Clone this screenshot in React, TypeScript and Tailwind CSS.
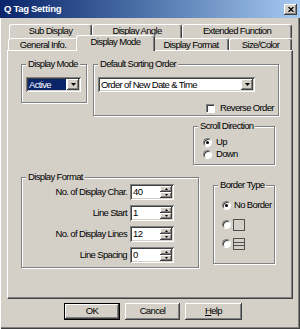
import React from "react";

const FONT = "font-['Liberation_Sans',Arial,sans-serif] text-[9.5px] tracking-[-0.65px] text-black";
const RAISED =
  "shadow-[inset_-1px_-1px_#404040,inset_1px_1px_#ffffff,inset_-2px_-2px_#808080,inset_2px_2px_#d4d0c8]";
const SUNKEN =
  "shadow-[inset_1px_1px_#808080,inset_-1px_-1px_#ffffff,inset_2px_2px_#404040,inset_-2px_-2px_#d4d0c8]";

function Tab({ label, className }: { label: string; className: string }) {
  return (
    <div
      className={`flex items-center justify-center border-t border-l border-white border-r border-r-[#404040] shadow-[inset_-1px_0_#808080] rounded-t-[3px] bg-[#d4d0c8] ${className}`}
    >
      {label}
    </div>
  );
}

function Group({
  label,
  className,
  children,
}: {
  label: string;
  className: string;
  children?: React.ReactNode;
}) {
  return (
    <div className={`relative border border-[#808080] shadow-[inset_1px_1px_#ffffff,1px_1px_#ffffff] ${className}`}>
      <span className="absolute -top-[7px] left-[4px] bg-[#d4d0c8] px-[2px] leading-[12px] whitespace-nowrap">
        {label}
      </span>
      {children}
    </div>
  );
}

function DropButton() {
  return (
    <div className={`w-[12px] h-full flex items-center justify-center bg-[#d4d0c8] ${RAISED}`}>
      <svg width="5" height="3" viewBox="0 0 5 3">
        <path d="M0 0h5L2.5 3z" fill="#000" />
      </svg>
    </div>
  );
}

function SpinButtons() {
  return (
    <div className="flex flex-col w-[12px] h-full">
      <div className={`flex-1 flex items-center justify-center bg-[#d4d0c8] ${RAISED}`}>
        <svg width="3" height="2" viewBox="0 0 3 2">
          <path d="M1.5 0L3 2H0z" fill="#000" />
        </svg>
      </div>
      <div className={`flex-1 flex items-center justify-center bg-[#d4d0c8] ${RAISED}`}>
        <svg width="3" height="2" viewBox="0 0 3 2">
          <path d="M0 0h3L1.5 2z" fill="#000" />
        </svg>
      </div>
    </div>
  );
}

function Radio({ checked }: { checked?: boolean }) {
  return (
    <div className="w-[9px] h-[9px] rounded-full bg-white border border-t-[#808080] border-l-[#808080] border-b-[#ffffff] border-r-[#ffffff] shadow-[inset_1px_1px_#404040] flex items-center justify-center">
      {checked && <div className="w-[3px] h-[3px] rounded-full bg-black" />}
    </div>
  );
}

function SpinRow({ label, value }: { label: string; value: string }) {
  return (
    <div className="flex items-center h-[16px] mb-[5px]">
      <span className="w-[105px] text-right whitespace-nowrap">{label}</span>
      <div className={`ml-[3px] flex w-[44px] h-[16px] bg-white p-[2px] ${SUNKEN}`}>
        <span className="flex-1 pl-[1px] leading-[12px]">{value}</span>
        <SpinButtons />
      </div>
    </div>
  );
}

function Button({ children, primary, className }: { children: React.ReactNode; primary?: boolean; className: string }) {
  return (
    <div
      className={`h-[17px] flex items-center justify-center bg-[#d4d0c8] ${
        primary ? "border border-black" : ""
      } ${RAISED} ${className}`}
    >
      {children}
    </div>
  );
}

export default function App() {
  return (
    <div className={`w-[300px] h-[329px] bg-[#d4d0c8] flex flex-col ${FONT}`}>
      {/* title bar */}
      <div className="h-[18px] flex items-center bg-gradient-to-r from-[#0a246a] to-[#a6caf0] pl-[4px] pr-[3px]">
        <span className="flex-1 text-white font-bold text-[9.5px] tracking-[-0.3px]">Q Tag Setting</span>
        <div className={`w-[13px] h-[11px] flex items-center justify-center bg-[#d4d0c8] ${RAISED}`}>
          <svg width="6" height="5" viewBox="0 0 6 5">
            <path d="M0.5 0L5.5 5M5.5 0L0.5 5" stroke="#000" strokeWidth="1.3" />
          </svg>
        </div>
      </div>

      {/* body */}
      <div className="flex-1 flex flex-col pt-[6px] shadow-[inset_1px_0_#ffffff,inset_-1px_-1px_#404040,inset_-2px_-2px_#808080]">
        {/* back tab row */}
        <div className="flex h-[14px] pl-[9px]">
          <Tab label="Sub Display" className="w-[83px]" />
          <Tab label="Display Angle" className="w-[90px]" />
          <Tab label="Extended Function" className="w-[110px]" />
        </div>
        {/* front tab row */}
        <div className="flex items-start h-[12px] pl-[8px]">
          <Tab label="General Info." className="w-[70px] h-[12px] pt-[1px]" />
          <Tab label="Display Mode" className="relative z-10 -mx-[2px] -mt-[3px] w-[79px] h-[16px] pb-[3px]" />
          <Tab label="Display Format" className="w-[76px] h-[12px] pt-[1px]" />
          <Tab label="Size/Color" className="w-[63px] h-[12px] pt-[1px]" />
        </div>

        {/* tab panel */}
        <div className="ml-[7px] w-[286px] h-[249px] border-t border-l border-white border-r border-b border-r-[#404040] border-b-[#404040] shadow-[inset_-1px_-1px_#808080] pl-[13px] pt-[13px]">
          <div className="flex items-start">
            <Group label="Display Mode" className="w-[66px] h-[39px] pt-[12px] pl-[4px]">
              <div className={`flex w-[55px] h-[15px] bg-white p-[2px] ${SUNKEN}`}>
                <div className="flex-1 mr-[1px] bg-[#0a246a] text-white leading-[11px] pl-[1px]">Active</div>
                <DropButton />
              </div>
            </Group>
            <Group label="Default Sorting Order" className="ml-[6px] w-[186px] h-[52px] pt-[12px] pl-[4px]">
              <div className={`flex w-[157px] h-[15px] bg-white p-[2px] ${SUNKEN}`}>
                <div className="flex-1 leading-[11px] pl-[1px]">Order of New Date &amp; Time</div>
                <DropButton />
              </div>
              <div className="flex items-center mt-[9px] ml-[108px]">
                <div className="w-[9px] h-[9px] bg-white border border-t-[#808080] border-l-[#808080] border-b-white border-r-white shadow-[inset_1px_1px_#404040]" />
                <span className="ml-[5px] whitespace-nowrap">Reverse Order</span>
              </div>
            </Group>
          </div>

          <Group label="Scroll Direction" className="ml-[172px] mt-[10px] w-[82px] h-[39px] pt-[9px] pl-[9px]">
            <div className="flex items-center h-[12px]">
              <Radio checked />
              <span className="ml-[4px]">Up</span>
            </div>
            <div className="flex items-center h-[12px]">
              <Radio />
              <span className="ml-[4px]">Down</span>
            </div>
          </Group>

          <div className="flex items-start mt-[12px]">
            <Group label="Display Format" className="w-[178px] h-[91px] pt-[6px]">
              <SpinRow label="No. of Display Char." value="40" />
              <SpinRow label="Line Start" value="1" />
              <SpinRow label="No. of Display Lines" value="12" />
              <SpinRow label="Line Spacing" value="0" />
            </Group>
            <Group label="Border Type" className="ml-[14px] mt-[8px] w-[62px] h-[79px] pt-[13px] pl-[8px]">
              <div className="flex items-center h-[13px] mb-[6px] w-[51px] overflow-hidden">
                <Radio checked />
                <span className="ml-[3px] whitespace-nowrap">No Border</span>
              </div>
              <div className="flex items-center h-[13px] mb-[6px]">
                <Radio />
                <svg className="ml-[2px]" width="12" height="12" viewBox="0 0 12 12">
                  <rect x="0.5" y="0.5" width="11" height="11" fill="none" stroke="#505050" />
                </svg>
              </div>
              <div className="flex items-center h-[13px]">
                <Radio />
                <svg className="ml-[2px]" width="12" height="12" viewBox="0 0 12 12">
                  <rect x="0.5" y="0.5" width="11" height="11" fill="none" stroke="#505050" />
                  <path d="M1 4.5h10M1 7.5h10" stroke="#505050" />
                </svg>
              </div>
            </Group>
          </div>
        </div>

        {/* buttons */}
        <div className="flex mt-[4px] pl-[64px] gap-[5px]">
          <Button primary className="w-[56px]">OK</Button>
          <Button className="w-[55px]">Cancel</Button>
          <Button className="w-[57px]">
            <span>
              <span className="underline">H</span>elp
            </span>
          </Button>
        </div>
      </div>
    </div>
  );
}
